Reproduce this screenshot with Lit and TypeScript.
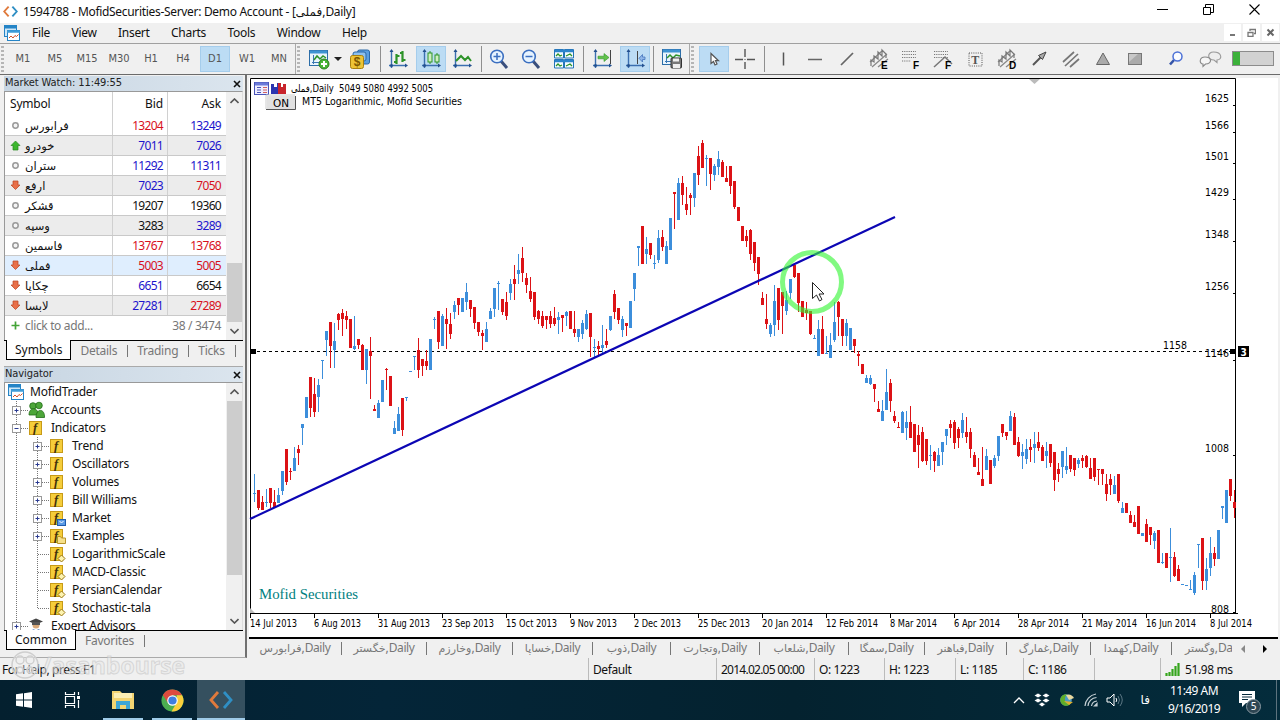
import { LitElement, html, svg, css, nothing } from 'lit';
import { customElement, property } from 'lit/decorators.js';
import { classMap } from 'lit/directives/class-map.js';

const BLUE = '#3c8edb';
const RED = '#dc1216';

// one entry per bar: colour, high, body top, body bottom, low
const CANDLES = `
b474,493,494,502 r490,490,508,510 r496,502,510,510 b489,502,503,507 r488,488,503,508 r490,502,508,508
b488,495,503,503 b471,471,491,495 r449,449,482,485 r468,471,472,480 b447,458,471,471 r445,449,453,465
b424,424,428,445 b397,397,418,418 r377,377,408,417 r378,394,412,417 b379,385,397,412 b360,360,361,379
b331,331,340,356 r322,322,346,368 b323,341,350,368 r313,314,320,330 r309,313,319,336 r311,316,320,329
r319,319,348,348 b316,346,349,350 r339,339,345,349 r344,345,370,370 b349,349,370,384 r337,351,356,399
r405,409,411,411 b400,403,418,418 b380,380,402,402 r368,369,370,390 r376,376,406,406 b421,428,434,434
b407,414,431,431 r398,398,430,436 b397,397,398,401 b371,371,372,372 b356,356,357,370 r338,350,370,378
r359,359,366,376 r350,361,366,370 b339,339,370,370 b317,319,320,329 r311,311,342,349 b314,316,346,346
r308,319,324,349 r313,324,334,339 b301,305,312,319 r298,298,305,315 b298,298,312,312 b283,292,302,310
r300,300,309,317 r307,307,323,329 r322,322,332,336 r330,333,336,350 b322,329,342,342 b308,311,319,319
b288,288,309,317 b281,283,284,310 r299,299,312,315 r292,302,316,320 b279,284,293,300 r265,279,284,300
b254,270,274,284 r247,258,273,282 r273,278,285,293 r277,291,299,302 r292,292,317,320 r310,311,319,324
r311,316,326,328 r316,316,320,329 r311,316,324,328 r307,318,324,326 b312,317,320,334 r315,315,318,332
b311,312,316,326 r311,311,329,329 r311,329,333,337 b329,329,337,342 b320,323,334,339 b310,314,329,330
r313,313,337,357 b339,347,348,357 r341,346,349,355 b325,345,348,354 r329,341,345,348 b316,316,330,331
r290,294,312,319 r308,308,320,324 b316,319,330,337 r323,323,326,336 b301,301,328,328 b273,273,289,301
b246,246,248,266 r226,226,264,264 b237,249,254,264 r243,243,255,259 b255,263,264,269 b230,238,260,263
r230,237,247,251 b241,246,264,264 b218,218,250,250 r192,192,194,229 b178,183,220,220 r176,183,195,205
r187,204,210,215 r193,195,198,215 b173,173,198,207 r146,156,175,185 r140,143,168,168 b155,158,159,186
r158,158,174,190 b164,166,175,181 b151,159,167,175 r160,162,177,177 r166,178,182,182 r166,166,186,194
r181,181,207,209 r207,207,221,221 r226,226,241,241 r230,236,241,247 r229,230,254,260 r242,242,263,271
r257,257,274,285 r292,298,305,305 r294,319,324,329 b323,325,334,337 b285,301,325,336 r288,288,320,330
r292,292,306,334 b291,300,311,315 b279,279,293,299 r265,265,277,278 r273,273,303,312 r301,301,317,317
r302,310,313,320 r311,311,334,335 b335,338,339,339 b320,329,356,356 r316,329,354,354 b336,353,354,354
b333,345,358,358 b302,322,340,342 r301,302,317,336 r319,319,336,346 b319,323,336,346 b328,328,350,350
r339,339,346,353 r351,354,356,366 r364,364,374,374 b375,378,383,383 b375,378,384,385 r384,384,389,402
r401,409,412,412 b400,411,421,421 b369,392,410,410 r379,383,401,412 r411,416,421,423 r422,427,428,428
b411,412,433,433 b411,422,428,440 r406,422,438,438 r424,424,452,452 r425,435,445,468 r427,432,461,462
r439,439,461,465 b445,455,456,470 r451,452,461,472 b448,455,466,466 b442,442,452,465 b429,429,436,445
r420,424,428,438 r420,422,443,449 r427,429,438,448 b413,420,433,438 r417,432,437,443 r428,432,449,458
r452,455,467,467 r458,472,475,475 r447,479,486,486 b449,456,470,470 r460,460,484,484 b455,458,466,468
b436,436,456,461 r424,424,433,437 r432,432,436,440 b411,416,431,431 r413,417,445,445 r437,442,456,457
b444,452,456,469 b439,449,459,464 r439,447,450,462 b432,444,448,463 r432,442,448,451 r445,447,461,461
b442,451,456,468 r444,444,463,467 r452,452,480,491 r463,469,474,482 b451,451,467,478 b447,466,470,474
r455,455,469,472 r458,458,470,476 b458,460,464,468 r455,458,461,468 r455,456,467,468 r458,468,479,479
r458,458,477,481 r469,469,470,485 r469,469,474,485 r474,484,494,501 r474,479,485,495 b476,485,494,494
r474,474,501,503 b502,508,513,513 r503,503,513,513 r511,515,523,523 r515,522,527,527 r506,506,534,534
b533,533,536,536 r519,524,542,542 r527,527,535,545 b531,533,541,549 r530,530,563,563 b553,562,563,564
r553,553,568,568 b528,557,558,582 r552,557,576,577 r565,569,581,581 b584,584,585,585 b585,585,586,586
b580,589,590,590 b572,575,593,595 b544,544,545,568 r538,538,581,590 b558,569,581,590 b537,553,568,576
r547,553,559,566 b530,530,559,559 b506,506,508,519 b490,490,523,523 r479,479,496,501 r490,502,508,518
`.trim().split(/\s+/).map((entry) => ({
  color: entry[0] === 'b' ? BLUE : RED,
  values: entry.slice(1).split(',').map(Number),
}));

const PRICES: [string, number][] = [
  ['1625', 98], ['1566', 125], ['1501', 156], ['1429', 192], ['1348', 234],
  ['1256', 286], ['1146', 353], ['1008', 448], ['808', 609],
];

const DATES: [string, number][] = [
  ['14 Jul 2013', 47], ['6 Aug 2013', 47], ['31 Aug 2013', 52], ['23 Sep 2013', 52],
  ['15 Oct 2013', 51], ['9 Nov 2013', 47], ['2 Dec 2013', 47], ['25 Dec 2013', 52],
  ['20 Jan 2014', 51], ['12 Feb 2014', 52], ['8 Mar 2014', 47], ['6 Apr 2014', 46],
  ['28 Apr 2014', 51], ['21 May 2014', 55], ['16 Jun 2014', 50], ['8 Jul 2014', 42],
];

const QUOTES = [
  { name: 'فرابورس', bid: '13204', ask: '13249', dir: 'flat', b: 'red', a: 'blue' },
  { name: 'خودرو', bid: '7011', ask: '7026', dir: 'up', b: 'blue', a: 'blue' },
  { name: 'ستران', bid: '11292', ask: '11311', dir: 'flat', b: 'blue', a: 'blue' },
  { name: 'ارفع', bid: '7023', ask: '7050', dir: 'down', b: 'blue', a: 'red' },
  { name: 'قشکر', bid: '19207', ask: '19360', dir: 'flat', b: 'black', a: 'black' },
  { name: 'وسپه', bid: '3283', ask: '3289', dir: 'flat', b: 'black', a: 'blue' },
  { name: 'فاسمین', bid: '13767', ask: '13768', dir: 'flat', b: 'red', a: 'red' },
  { name: 'فملی', bid: '5003', ask: '5005', dir: 'down', b: 'red', a: 'red', selected: true },
  { name: 'چکاپا', bid: '6651', ask: '6654', dir: 'down', b: 'blue', a: 'black' },
  { name: 'لابسا', bid: '27281', ask: '27289', dir: 'down', b: 'blue', a: 'red' },
];

const TREE = [
  { label: 'MofidTrader', level: 0, icon: 'app' },
  { label: 'Accounts', level: 1, icon: 'people', box: '+' },
  { label: 'Indicators', level: 1, icon: 'f', box: '-' },
  { label: 'Trend', level: 2, icon: 'f', box: '+' },
  { label: 'Oscillators', level: 2, icon: 'f', box: '+' },
  { label: 'Volumes', level: 2, icon: 'f', box: '+' },
  { label: 'Bill Williams', level: 2, icon: 'f', box: '+' },
  { label: 'Market', level: 2, icon: 'f-market', box: '+' },
  { label: 'Examples', level: 2, icon: 'f-folder', box: '+' },
  { label: 'LogarithmicScale', level: 2, icon: 'f-dot' },
  { label: 'MACD-Classic', level: 2, icon: 'f-dot' },
  { label: 'PersianCalendar', level: 2, icon: 'f-dot' },
  { label: 'Stochastic-tala', level: 2, icon: 'f-dot', last: true },
  { label: 'Expert Advisors', level: 1, icon: 'expert', box: '+' },
];

const CHART_TABS: [string, number][] = [
  ['فرابورس', 93], ['خگستر', 85], ['وخارزم', 86], ['خساپا', 80], ['ذوب', 78], ['وتجارت', 89],
  ['شلعاب', 89], ['سمگا', 76], ['فباهنر', 82], ['غمارگ', 84], ['کهمدا', 81],
];

// icon name, gap before it; 'sep', 'edge' and 'caret' are narrower than the 30px buttons
const TOOLS: [string, number, boolean?][] = [
  ['new', 4], ['caret', 0], ['money', 3], ['sep', 5],
  ['bars', 2], ['candles', 3, true], ['line', 1], ['sep', 4],
  ['zoomin', 2], ['zoomout', 2], ['tile', 3], ['sep', 4],
  ['scroll', 3], ['shift', 3, true], ['sep', 3], ['template', 3], ['edge', 2],
  ['cursor', 5, true], ['cross', 1], ['sep', 4],
  ['vline', 3], ['hline', 2], ['trend', 2], ['channel-e', 2], ['fibo', 2], ['fibofan', 2],
  ['text', 2], ['channel-d', 2], ['arrow', 2], ['pitch', 2], ['triangle', 2], ['rect', 2],
  ['search', 11], ['chat', 4],
];

const axes = svg`<path d="M3.500 1v18M1 16.500h17" stroke="#3b6fb0" stroke-width="1.400" fill="none"/>
  <path d="M3.500 0l-2 3h4zM20 16.500l-3-2v4z" fill="#24518f"/><circle cx="3.500" cy="16.500" r="1.500" fill="#24518f"/>`;

const channel = svg`<path d="M1 13L13 2M3 18L18 5M9 18L19 10" stroke="#888" stroke-width="1.300"/>
  <path d="M2 17v-6l3 2V7l4 3V3l4 4V1l4 4v4" stroke="#777" stroke-width="1.200" fill="none"/>`;

const letter = (char: string) => svg`<text x="12" y="20" font-family="Liberation Sans" font-weight="bold" font-size="10" fill="#000">${char}</text>`;

const fiboDots = svg`<path d="M1 2.500h14M1 5.500h14M1 8.500h14" stroke="#777" stroke-width="1.200" stroke-dasharray="1.200 1"/>`;

const TOOL_ICONS: Record<string, unknown> = {
  new: svg`<rect x=".5" y="1.500" width="18" height="15" fill="#e9f4fc" stroke="#2c6da8"/><path d="M1 3h17" stroke="#3d93d2" stroke-width="3"/>
    <path d="M4.500 6v9M3 13.500h13" stroke="#3b78b5"/><path d="M5 11l3-4 3 3 3-3 3 2" stroke="#2d9329" stroke-width="1.500" fill="none"/>
    <circle cx="15" cy="15" r="5" fill="#48b437" stroke="#27801c"/><path d="M12 15h6M15 12v6" stroke="#fff" stroke-width="2"/>`,
  money: svg`<rect x="7.500" y="1" width="12" height="14" rx="2" fill="#5a9ee0" stroke="#2b68a7"/><rect x="3" y="3" width="13" height="9" rx="2" fill="#8dc0ee" stroke="#2b68a7"/>
    <rect x=".5" y="6.500" width="13" height="13" rx="2" fill="#edc436" stroke="#a8800f"/><text x="3.800" y="17" font-family="Liberation Sans" font-weight="bold" font-size="12" fill="#7d5800">$</text>`,
  bars: svg`${axes}<path d="M8.500 5v10M6 13h2.500M8.500 7h3M14.500 2v11M12 4h2.500M14.500 11h3" stroke="#2d9329" stroke-width="2.200" fill="none"/>`,
  candles: svg`${axes}<path d="M9 2v13M16 4v11" stroke="#2d9329"/><rect x="7" y="4" width="4" height="9" fill="#cfeec0" stroke="#2d9329"/><rect x="14" y="6" width="4" height="7" fill="#cfeec0" stroke="#2d9329"/>`,
  line: svg`${axes}<path d="M4 12l5-5 4 4 3-3 3 4" stroke="#2d9329" stroke-width="2" fill="none"/>`,
  zoomin: svg`<path d="M12 12l6 7" stroke="#3a4f7c" stroke-width="3"/><circle cx="8" cy="7.500" r="6.300" fill="#e6f3ff" stroke="#3b6fc0" stroke-width="1.600"/><path d="M4.500 7.500h7M8 4v7" stroke="#3b6fc0" stroke-width="1.500"/>`,
  zoomout: svg`<path d="M12 12l6 7" stroke="#3a4f7c" stroke-width="3"/><circle cx="8" cy="7.500" r="6.300" fill="#e6f3ff" stroke="#3b6fc0" stroke-width="1.600"/><path d="M4.500 7.500h7" stroke="#3b6fc0" stroke-width="1.500"/>`,
  tile: svg`<path d="M.5 .5h9v8.500h-9zM10.500 .5h9v8.500h-9zM.5 10.500h9v8.500h-9zM10.500 10.500h9v8.500h-9z" fill="#f4fbff" stroke="#2474b8"/>
    <path d="M1 2h18M1 12h18" stroke="#2c84cc" stroke-width="2.500"/><path d="M2 7l2-2 2 2 2-1M12 7l2-1 2-1 2 2M2 17l2-2 2 2 2-1M12 17l2-1 2-1 2 2" stroke="#2d9329" stroke-width="1.300" fill="none"/>`,
  scroll: svg`${axes}<path d="M18.500 1v14" stroke="#444"/><path d="M6 7.200h6V4.500l5 4-5 4V9.800H6z" fill="#62c24b" stroke="#2d9329" stroke-width=".6"/>`,
  shift: svg`${axes}<path d="M12.500 2v13" stroke="#444"/><path d="M20 8h-2.500V5.500L14 9.300l3.500 3.700v-2.500H20z" fill="#8fb6e8" stroke="#4474bb" stroke-width=".8"/>`,
  template: svg`<rect x=".5" y=".5" width="18" height="15" fill="#e9f4fc" stroke="#2c6da8"/><path d="M1 2h17" stroke="#3d93d2" stroke-width="3"/><path d="M4.500 5v9M3 12.500h6" stroke="#3b78b5"/>
    <path d="M5 9l3-3 3 3 3-3 4 1" stroke="#2d9329" stroke-width="1.500" fill="none"/><rect x="9" y="9" width="10.500" height="10" rx="1" fill="#777" stroke="#333"/><path d="M11 9.500h6v3h-6zM11 15h7v4h-7z" fill="#eee"/>`,
  cursor: svg`<path d="M7 4.500v10l2.500-2 1.500 3.500 2-1-1.500-3.300h3z" fill="#fff" stroke="#555" stroke-width="1.200"/>`,
  cross: svg`<path d="M0 10.500h8M12 10.500h8M10 0v8M10 13v7" stroke="#555" stroke-width="1.400"/><path d="M9.500 10.500h1" stroke="#555"/>`,
  vline: svg`<path d="M10.500 3.500v13" stroke="#555" stroke-width="1.500"/>`,
  hline: svg`<path d="M3 10.500h14" stroke="#666" stroke-width="1.500"/>`,
  trend: svg`<path d="M4 16L16 4" stroke="#666" stroke-width="1.700"/>`,
  'channel-e': svg`${channel}${letter('E')}`,
  'channel-d': svg`${channel}${letter('D')}`,
  fibo: svg`${fiboDots}<path d="M1 12h9" stroke="#777" stroke-dasharray="1.200 1"/>${letter('F')}`,
  fibofan: svg`${fiboDots}<path d="M1 18L12 8l7 7" stroke="#777" stroke-width="1.500" fill="none"/>${letter('F')}`,
  text: svg`<rect x="4" y="4" width="13" height="13" fill="none" stroke="#555" stroke-dasharray="1 1.200"/><text x="6.300" y="14.500" font-family="Liberation Serif" font-weight="bold" font-size="12" fill="#555">T</text>`,
  arrow: svg`<path d="M4 16L14 6" stroke="#555" stroke-width="2"/><path d="M17 3l-7.500 3.500 4 4z" fill="#aaa" stroke="#444"/>`,
  pitch: svg`<path d="M2 13L13 3M4 17L17 5M9 18l9-8" stroke="#777" stroke-width="1.700"/>`,
  triangle: svg`<path d="M10 4l6.500 11.500h-13z" fill="#aaa" stroke="#666"/>`,
  rect: svg`<rect x="3.500" y="4.500" width="13" height="11" fill="#aaa" stroke="#777"/><path d="M4 13L13 5H4z" fill="#c8c8c8"/>`,
  search: svg`<path d="M8 11l-4 4.500" stroke="#3454a8" stroke-width="2.600"/><circle cx="11.500" cy="7.500" r="4.500" fill="#fafcff" stroke="#4a6fd6" stroke-width="1.500"/>`,
  chat: svg`<path d="M13.500 3c9 0 9 8 3.500 8v2.500L14 11c-7 0-7-8-.5-8z" fill="#eee" stroke="#999" stroke-width="1.100"/><path d="M5 8c-6 0-6 7-2 7v2.500L5.500 15c7 0 6.500-7-.5-7z" fill="#f6f6f6" stroke="#888" stroke-width="1.100"/>`,
};

const appIcon = html`<svg width="16" height="16" viewBox="0 0 16 16">
  <rect x=".5" y=".5" width="12" height="11" fill="#cfe8f8" stroke="#2584c6"/><path d="M0 2h13" stroke="#2584c6" stroke-width="3"/>
  <rect x="3.500" y="5.500" width="12" height="10" fill="#fff" stroke="#2584c6"/><path d="M3 6.500h13" stroke="#3f9cd8" stroke-width="2.500"/>
  <path d="M5 13l2-2 2 2 2-2.500 1.500 1 2-2" stroke="#d4502a" fill="none"/></svg>`;

@customElement('app-icon')
export class AppIcon extends LitElement {
  @property() name = '';

  static styles = css`
    :host { display: block; width: 20px; height: 20px; }
    svg { display: block; overflow: visible; }
  `;

  render() {
    return html`<svg width="20" height="20" viewBox="0 0 20 20">${TOOL_ICONS[this.name] ?? nothing}</svg>`;
  }
}

@customElement('price-chart')
export class PriceChart extends LitElement {
  static styles = css`
    :host { display: block; background: #fff; }
    svg { display: block; }
    text { font-family: "DejaVu Sans Condensed", "DejaVu Sans", sans-serif; font-size: 10px; fill: #000; }
    .brand { font-family: "Liberation Serif", serif; font-size: 15px; fill: #008080; }
    .price { font-size: 11px; }
    .wick, .body { shape-rendering: crispEdges; }
    .on { font-size: 11px; }
  `;

  candle(color: string, [high, top, bottom, low]: number[], i: number) {
    const x = 254 + i * 4;
    return svg`<rect class="wick" x=${x} y=${high} width="1" height=${low - high} fill=${color}/>
      <rect class="body" x=${x - 1} y=${top} width="3" height=${bottom - top} fill=${color}/>`;
  }

  render() {
    return html`<svg width="1028" height="558" viewBox="249 78 1028 558">
      <path d="M250.500 613.500V78.500H1235.500V613.500" fill="none" stroke="#000"/>
      <path d="M250 613.500H1238" stroke="#000"/>
      <path d="M1029 79h11l-5.500 5z" fill="#bbb"/>
      <path d="M250 613v-5l5 5z" fill="#bbb"/>
      <path d="M251 351.500H1235" stroke="#000" stroke-dasharray="3 3"/>
      ${CANDLES.map((c, i) => this.candle(c.color, c.values, i))}
      <path d="M250 519L895 217" stroke="#0c06b4" stroke-width="2.200"/>
      <rect x="250" y="349" width="6" height="5"/><rect x="1230" y="349" width="5" height="5"/>
      ${PRICES.map(([label, y]) => svg`
        <text class="price" x="1229" y=${y + 4} text-anchor="end" textLength=${label.length * 6} lengthAdjust="spacingAndGlyphs">${label}</text>
        <path d="M1233 ${Math.min(y + 7.5, 612.5)}h3" stroke="#000"/>`)}
      ${DATES.map(([label, width], i) => svg`
        <path d="M${250.5 + i * 64} 614v4" stroke="#000"/>
        <text x=${250 + i * 64} y="627" textLength=${width} lengthAdjust="spacingAndGlyphs">${label}</text>`)}
      <text class="price" x="1163" y="349" textLength="24" lengthAdjust="spacingAndGlyphs">1158</text>
      <rect x="1238" y="346" width="11" height="11"/>
      <text x="1240.500" y="355.500" font-weight="bold" style="fill:#fff">3</text>

      <g transform="translate(254 82)">
        <rect x=".5" y=".5" width="14" height="12" fill="#eef" stroke="#4a55b8"/><path d="M1 2h13" stroke="#6a7ad8" stroke-width="3"/>
        <path d="M3 5.500h4M3 8h4M3 10.500h4" stroke="#4a55b8"/><path d="M9 5.500h4M9 8h4M9 10.500h4" stroke="#d36060"/>
        <path d="M17 2h3v3h3V1h3v11h-9z" fill="#2b35b0"/><path d="M24 1h3v4h2V2h3v10h-8z" fill="#c8242c"/>
      </g>
      <text x="291" y="92" textLength="142" lengthAdjust="spacingAndGlyphs" xml:space="preserve">فملی,Daily  5049 5080 4992 5005</text>
      <path d="M266 109V95h29" fill="none" stroke="#ccc"/><rect x="267" y="96" width="28" height="13" fill="#e1e1e1"/><path d="M266 109.500h29.500V96" fill="none" stroke="#555"/>
      <text class="on" x="273" y="106.500" textLength="16" lengthAdjust="spacingAndGlyphs">ON</text>
      <text class="on" x="302" y="105" textLength="160" lengthAdjust="spacingAndGlyphs">MT5 Logarithmic, Mofid Securities</text>
      <text class="brand" x="259" y="599" textLength="99" lengthAdjust="spacingAndGlyphs">Mofid Securities</text>

      <circle cx="812" cy="282" r="29.500" fill="none" stroke="#33f533" stroke-opacity=".62" stroke-width="5"/>
      <path d="M812.500 282.500v16l4-3.500 3 6 2.500-1.500-3-5.500h5z" fill="#fff" stroke="#222"/>
    </svg>`;
  }
}

@customElement('market-watch')
export class MarketWatch extends LitElement {
  static styles = css`
    :host { display: block; flex: 1; background: #fff; font: 12px "Noto Sans", sans-serif; color: #111; }
    .row { display: grid; grid-template-columns: 20px 88px 55px 57px; height: 20px; line-height: 20px; box-sizing: border-box; border-bottom: 1px solid #c9c9c9; }
    .row > * { height: 19px; }
    .header { height: 24px; border-bottom: none; line-height: 24px; grid-template-columns: 108px 55px 57px; }
    .header > * { height: 24px; }
    .header .name { padding-left: 5px; letter-spacing: -0.2px; }
    .alt { background: #ececec; }
    .selected { background: #dfeefe; }
    .name { font-family: "Noto Sans", "DejaVu Sans", sans-serif; border-right: 1px solid #d0d0d0; }
    .fa { font-family: "DejaVu Sans", sans-serif; font-size: 11.5px; }
    .num { text-align: right; padding-right: 4px; border-right: 1px solid #d0d0d0; letter-spacing: -0.7px; }
    .num.end { border-right: none; }
    .num.word { letter-spacing: -0.1px; }
    .red { color: #d8101c; }
    .blue { color: #1c14cc; }
    .black { color: #111; }
    .mark { display: flex; align-items: center; justify-content: center; }
    .add { border: none; color: #777; grid-template-columns: 20px 120px 80px; }
    .add .num, .add .name { border: none; letter-spacing: -0.35px; }
  `;

  mark(dir: string) {
    if (dir === 'flat') {
      return svg`<circle cx="5.500" cy="5.500" r="2.700" fill="#f4f4f4" stroke="#999" stroke-width="1.500"/>`;
    }
    return dir === 'up'
      ? svg`<path d="M5.500 1l4.500 4.500H8V10H3V5.500H1z" fill="#3cb62e" stroke="#278a1e" stroke-width=".7"/>`
      : svg`<path d="M5.500 9.500L10 5H8V1H3v4H1z" fill="#e8704a" stroke="#b94420" stroke-width=".7"/>`;
  }

  render() {
    return html`
      <div class="row header"><span class="name">Symbol</span><span class="num word">Bid</span><span class="num end word">Ask</span></div>
      ${QUOTES.map((q, i) => html`
        <div class=${classMap({ row: true, alt: i % 2 === 1, selected: !!q.selected })}>
          <span class="mark"><svg width="11" height="11">${this.mark(q.dir)}</svg></span>
          <span class="name fa">${q.name}</span>
          <span class="num ${q.b}">${q.bid}</span>
          <span class="num end ${q.a}">${q.ask}</span>
        </div>`)}
      <div class="row add">
        <span class="mark"><svg width="11" height="11"><path d="M1.500 5.500h8M5.500 1.500v8" stroke="#43a336" stroke-width="1.700"/></svg></span>
        <span class="name">click to add...</span>
        <span class="num end">38 / 3474</span>
      </div>
    `;
  }
}

@customElement('nav-tree')
export class NavTree extends LitElement {
  static styles = css`
    :host { display: block; flex: 1; overflow: hidden; background: #fff; font: 12px "Noto Sans", sans-serif; color: #111; letter-spacing: -0.2px; }
    .row { display: flex; align-items: center; height: 18px; line-height: 18px; white-space: pre; }
    .icon { width: 23px; height: 18px; overflow: visible; }
    .root { padding-left: 3px; gap: 6px; }
  `;

  guides(item: (typeof TREE)[number]) {
    const cx = item.level === 1 ? 11.5 : 32.5;
    const width = item.level === 1 ? 23 : 44;
    const branch = item.level === 1 ? '' : `M${cx} 0v${item.last ? 9 : 18}`;
    return html`<svg width=${width} height="18">
      <path d="M11.500 0v18${branch}M${cx} 9.500h${width - cx}" stroke="#777" stroke-dasharray="1 1" fill="none" shape-rendering="crispEdges"/>
      ${item.box ? svg`<rect x=${cx - 4} y="5.500" width="8" height="8" fill="#fff" stroke="#999"/><path d="M${cx - 2} 9.500h4" stroke="#2a3a90"/>` : nothing}
      ${item.box === '+' ? svg`<path d="M${cx} 7.500v4" stroke="#2a3a90"/>` : nothing}
    </svg>`;
  }

  icon(name: string) {
    if (name === 'people') {
      return svg`<g fill="#4da63a" stroke="#226c18" stroke-width=".8"><circle cx="5" cy="5" r="3.300"/><circle cx="11" cy="4.500" r="3.300"/><path d="M1 14c0-8 8-8 9-2v2z"/><path d="M8 16.500c0-9.500 9-9.500 8.500 0z"/></g>`;
    }
    if (name === 'expert') {
      return svg`<circle cx="8" cy="8" r="3.500" fill="#d9a878"/><path d="M1 4.500L8 1.500l7 3-7 3z" fill="#444"/><path d="M4 5v3h8V5" fill="#555"/><path d="M1 18c0-8 14-8 15 0z" fill="#3f6eb0"/><path d="M6 12l2 3 2-3" fill="#fff"/>`;
    }
    return svg`<rect x="1.500" y="2.500" width="12" height="13" fill="#f5cd3a" stroke="#c79a17"/>
      <text x="5" y="12.800" font-family="Liberation Serif" font-style="italic" font-weight="bold" font-size="12.500" fill="#40300a">f</text>
      ${name === 'f-market' ? svg`<rect x="8.500" y="10.500" width="8" height="6" fill="#5b9be6" stroke="#1f5cae"/><path d="M10.500 12l2 2 2-2" stroke="#fff" fill="none"/>` : nothing}
      ${name === 'f-folder' ? svg`<path d="M8.500 16.500v-7h3l1 1.500h4v5.500z" fill="#f6e08a" stroke="#b8942a"/>` : nothing}
      ${name === 'f-dot' ? svg`<path d="M12.500 10l3.500 3.500-3.500 3.500L9 13.500z" fill="#fdf3b0" stroke="#9a7710"/>` : nothing}`;
  }

  render() {
    return TREE.map((item) => item.level === 0
      ? html`<div class="row root">${appIcon}<span>${item.label}</span></div>`
      : html`<div class="row">${this.guides(item)}<svg class="icon">${this.icon(item.icon)}</svg><span>${item.label}</span></div>`);
  }
}

@customElement('app-root')
export class AppRoot extends LitElement {
  static styles = css`
    :host { display: flex; flex-direction: column; width: 1280px; height: 720px; overflow: hidden; background: #f0f0f0; font: 12px "Noto Sans", "DejaVu Sans", sans-serif; color: #111; white-space: nowrap; }
    svg { display: block; flex: none; }
    .fa { font-family: "DejaVu Sans", sans-serif; letter-spacing: 0; }

    .title { display: flex; align-items: center; height: 23px; background: #fff; padding-left: 3px; gap: 5px; }
    .title-text { flex: 1; letter-spacing: -0.32px; }
    .caption-buttons { display: flex; align-items: center; gap: 35px; padding-right: 20px; margin-top: -3px; }

    .menu { display: flex; align-items: center; height: 20px; padding-left: 4px; border-bottom: 1px solid #a0a0a0; }
    .menu-item { letter-spacing: -0.3px; }
    .menu-items { display: flex; flex: 1; gap: 21.5px; padding-left: 12px; }
    .mdi { display: flex; gap: 2px; padding-right: 1px; }
    .mdi-button { width: 17px; height: 17px; background: #fff; display: flex; align-items: center; justify-content: center; }

    .toolbar { display: flex; align-items: center; height: 31px; border-bottom: 1px solid #6b6b6b; font: 11px "DejaVu Sans Condensed", "DejaVu Sans", sans-serif; color: #555; }
    .grip { width: 3px; height: 26px; background: repeating-linear-gradient(#b5b5b5 0 2px, transparent 2px 4px); flex: none; }
    .frames { display: flex; gap: 2px; padding: 0 1px 0 4px; }
    .button { width: 30px; height: 26px; display: flex; align-items: center; justify-content: center; flex: none; }
    .on { background: #bcdcf4; box-shadow: inset 0 0 0 1px #a5cdec; }
    .sep { width: 1px; height: 26px; background: #8f8f8f; flex: none; }
    .edge { border-right: 1px solid #aaa; height: 30px; width: 0; margin-right: 1px; flex: none; }
    .caret { width: 8px; border: 4px solid transparent; border-top-color: #222; box-sizing: border-box; height: 4px; border-bottom: none; flex: none; }
    .meter { width: 40px; height: 13px; margin-left: 7px; background: #d2d2d2; border: 1px solid #8c8c8c; }
    .meter-fill { width: 7px; height: 100%; background: #3cb13a; }

    .main { display: flex; height: 583px; }
    .side { width: 247px; display: flex; flex-direction: column; border-right: 2px solid #707070; box-sizing: border-box; padding: 1px 2px 0 4px; border-bottom: 1px solid #aaa; }
    .panel-title { display: flex; align-items: center; justify-content: space-between; height: 15px; line-height: 13px; background: linear-gradient(90deg, #c7d5e2, #dbe5ee); padding: 0 2px 0 1px; font: 11px/13px "DejaVu Sans Condensed", "DejaVu Sans", sans-serif; letter-spacing: -0.08px; color: #222; }
    .panel-title span { margin-top: -2px; }
    .panel { display: flex; border: 1px solid #999; border-right-color: #ddd; border-bottom: none; background: #fff; box-sizing: border-box; }
    .watch { height: 249px; }
    .nav { height: 248px; }
    .nav-title { margin-top: 6px; border-top: 1px solid #aaa; }
    .scroll { width: 16px; display: flex; flex-direction: column; align-items: center; background: #f0f0f0; flex: none; }
    .scroll svg { margin: 6px 0; }
    .thumb { width: 15px; background: #cdcdcd; }
    .tabs { display: flex; height: 20px; line-height: 19px; border-top: 1px solid #000; color: #777; box-sizing: border-box; letter-spacing: -0.25px; }
    .tab { padding: 0 10px 0 9px; flex: none; }
    .active { margin: -1px 0 0 2px; background: #fff; color: #111; border: solid #000; border-width: 0 1.5px 1.5px; padding: 0 8px; height: 19px; letter-spacing: 0; }
    .bar { width: 1px; height: 12px; background: #777; margin-top: 4px; flex: none; }

    .chart-area { display: flex; flex-direction: column; flex: 1; padding: 2px 2px 0 2px; }
    price-chart { border-bottom: 2px solid #000; height: 559px; margin-top: 1px; }
    .chart-tabs { display: flex; align-items: center; height: 19px; color: #777; }
    .chart-tab { box-sizing: border-box; text-align: center; border-right: 1px solid #777; height: 13px; line-height: 12px; flex: none; letter-spacing: -0.4px; }
    .chart-tab .fa { font-size: 11px; }
    .chart-tab.cut { border: none; width: 60px; padding-left: 13px; text-align: left; overflow: hidden; height: 19px; line-height: 17px; }
    .arrows { display: flex; gap: 18px; padding-left: 9px; }

    .status { position: relative; display: flex; height: 22px; line-height: 21px; letter-spacing: -0.4px; }
    .cell { border-left: 1px solid #bbb; padding-left: 4px; box-sizing: border-box; display: flex; align-items: center; gap: 5px; }
    .cell.first { border: none; width: 588px; padding-left: 2px; }
    .cell.stamp { width: 98px; letter-spacing: -0.75px; }
    .watermark { position: absolute; left: 10px; top: -10px; display: flex; align-items: center; gap: 0; font: bold 23px/34px "Open Sans", sans-serif; letter-spacing: 0; color: rgba(232, 232, 232, .5); -webkit-text-stroke: 1px rgba(190, 190, 190, .5); }

    .taskbar { display: flex; height: 40px; background: linear-gradient(90deg, #04202f, #042538 30%, #04222f 62%, #042c3c); color: #fff; }
    .task { height: 40px; width: 48px; display: flex; align-items: center; justify-content: center; box-sizing: border-box; }
    .task.run { width: 40px; margin: 0 5px 0 4px; border-bottom: 2px solid #9fcbe8; padding-top: 2px; }
    .task.current { width: 48px; margin: 0; background: #35505f; border-bottom: 2px solid #9fcbe8; padding-top: 2px; }
    .tray { display: flex; align-items: center; gap: 9px; margin-left: auto; }
    .speaker { margin-left: -2px; }
    .lang { margin: 0 2px 0 9px; }
    .clock { text-align: center; line-height: 18px; width: 66px; letter-spacing: -0.55px; }
    .notice { position: relative; width: 20px; height: 20px; margin: 0 9px 0 2px; }
    .badge { position: absolute; left: 8px; top: 9px; width: 15px; height: 15px; border-radius: 50%; background: #2e4653; border: 1px solid #8a9aa3; box-sizing: border-box; font-size: 10px; line-height: 13px; text-align: center; }
    .edge-line { width: 3px; height: 40px; border-left: 1px solid #5d737e; }
  `;

  closeGlyph = html`<svg width="8" height="8"><path d="M1 1l6 6M7 1L1 7" stroke="#111" stroke-width="1.600"/></svg>`;

  brandMark(width: number, height: number, stroke: number) {
    return html`<svg width=${width} height=${height} viewBox="0 0 24 18" preserveAspectRatio="none">
      <path d="M9 1L2 9l7 8" fill="none" stroke="#e07a3c" stroke-width=${stroke}/>
      <path d="M15 1l7 8-7 8" fill="none" stroke="#2f8fc4" stroke-width=${stroke}/>
    </svg>`;
  }

  scrollbar(before: number, thumb: number) {
    const chevron = (d: string) => html`<svg width="9" height="6"><path d=${d} fill="none" stroke="#555" stroke-width="1.600"/></svg>`;
    return html`<div class="scroll">
      ${chevron('M.5 5L4.500 1l4 4')}
      <div style="height:${before}px"></div>
      <div class="thumb" style="height:${thumb}px"></div>
      <div style="flex:1"></div>
      ${chevron('M.5 1l4 4 4-4')}
    </div>`;
  }

  tabs(active: string, rest: string[]) {
    return html`<div class="tabs"><div class="tab active">${active}</div>
      ${rest.map((t) => html`<div class="tab">${t}</div><div class="bar"></div>`)}</div>`;
  }

  tool([name, gap, on]: [string, number, boolean?]) {
    const margin = `margin-left:${gap}px`;
    if (name === 'sep' || name === 'caret') return html`<div class=${name} style=${margin}></div>`;
    if (name === 'edge') return html`<div class="edge" style=${margin}></div><div class="grip"></div>`;
    return html`<div class=${classMap({ button: true, on: !!on })} style=${margin}><app-icon name=${name}></app-icon></div>`;
  }

  tray() {
    return html`<div class="tray">
      <svg width="12" height="8"><path d="M1 7l5-5 5 5" fill="none" stroke="#fff" stroke-width="1.300"/></svg>
      <svg width="16" height="16" viewBox="0 0 16 16"><path d="M4 1l4 2.500L4 6 0 3.500zM12 1l4 2.500L12 6 8 3.500zM4 6l4 2.500L4 11 0 8.500zM12 6l4 2.500-4 2.500-4-2.500zM8 10l3.500 2.300L8 15l-3.500-2.700z" fill="#fff" stroke="#04283a" stroke-width=".8"/></svg>
      <svg width="16" height="16"><circle cx="7" cy="8" r="5.800" fill="#4c9cc8"/><path d="M7 2.200a5.800 5.800 0 1 0 4.500 9.600C6 13 4 7 8 2.300z" fill="#5fae2a"/><path d="M7 3q5-2 8 3l-5 2z" fill="#e9d9a0"/><path d="M5 9l9 1-4 3z" fill="#e0b02b"/></svg>
      <svg width="15" height="16"><path d="M1 14A13 13 0 0 1 12 2M4 14a9 9 0 0 1 8.500-8.500M7.500 14A6 6 0 0 1 13 9M10.500 14l2.500-2.500V14z" fill="none" stroke="#c6d0d5" stroke-width="1.200"/></svg>
      <svg class="speaker" width="17" height="16"><path d="M1 6h3l4-4v12l-4-4H1z" fill="none" stroke="#fff"/><path d="M10 6q1.500 2 0 4" fill="none" stroke="#fff"/><path d="M12 4q3 4 0 8M14 2q4.500 6 0 12" fill="none" stroke="#5d7885"/></svg>
      <span class="fa lang">فا</span>
      <div class="clock">11:49 AM<br>9/16/2019</div>
      <div class="notice">
        <svg width="18" height="18"><path d="M1 1h16v12H8l-4 4v-4H1z" fill="#fff"/><path d="M4 4.500h10M4 7h10M4 9.500h6" stroke="#04283a"/></svg>
        <div class="badge">5</div>
      </div>
      <div class="edge-line"></div>
    </div>`;
  }

  render() {
    return html`
      <div class="title">
        ${this.brandMark(15, 11, 3)}
        <span class="title-text">1594788 - MofidSecurities-Server: Demo Account - [<bdi class="fa">فملی</bdi>,Daily]</span>
        <div class="caption-buttons">
          <svg width="11" height="11"><path d="M0 5.500h11" stroke="#000"/></svg>
          <svg width="11" height="11"><path d="M.5 3.500h7v7h-7zM2.500 3V.5h8v8H8" fill="none" stroke="#000"/></svg>
          <svg width="11" height="11"><path d="M.5 .5l10 10M10.500 .5l-10 10" stroke="#000" stroke-width="1.100"/></svg>
        </div>
      </div>
      <div class="menu">
        ${appIcon}
        <div class="menu-items">
          ${['File', 'View', 'Insert', 'Charts', 'Tools', 'Window', 'Help'].map((m) => html`<span class="menu-item">${m}</span>`)}
        </div>
        <div class="mdi">
          <div class="mdi-button"><svg width="9" height="9"><path d="M2 7h5" stroke="#777" stroke-width="2"/></svg></div>
          <div class="mdi-button"><svg width="9" height="9"><path d="M1 4.500h5v4H1zM3 3V1.500h5.500v4H7" fill="none" stroke="#777" stroke-width="1.300"/></svg></div>
          <div class="mdi-button"><svg width="9" height="9"><path d="M1.500 1.500l6 6M7.500 1.500l-6 6" stroke="#666" stroke-width="2"/></svg></div>
        </div>
      </div>
      <div class="toolbar">
        <div class="grip" style="margin-left:1px"></div>
        <div class="frames">
          ${['M1', 'M5', 'M15', 'M30', 'H1', 'H4', 'D1', 'W1', 'MN'].map((f) => html`<div class=${classMap({ button: true, on: f === 'D1' })}>${f}</div>`)}
        </div>
        <div class="edge"></div><div class="grip"></div>
        ${TOOLS.map((t) => this.tool(t))}
        <div class="meter"><div class="meter-fill"></div></div>
      </div>

      <div class="main">
        <div class="side">
          <div class="panel-title"><span>Market Watch: 11:49:55</span>${this.closeGlyph}</div>
          <div class="panel watch"><market-watch></market-watch>${this.scrollbar(153, 59)}</div>
          ${this.tabs('Symbols', ['Details', 'Trading', 'Ticks'])}
          <div class="panel-title nav-title"><span>Navigator</span>${this.closeGlyph}</div>
          <div class="panel nav"><nav-tree></nav-tree>${this.scrollbar(0, 174)}</div>
          ${this.tabs('Common', ['Favorites'])}
        </div>
        <div class="chart-area">
          <price-chart></price-chart>
          <div class="chart-tabs">
            ${CHART_TABS.map(([name, width]) => html`<div class="chart-tab" style="width:${width}px"><bdi class="fa">${name}</bdi>,Daily</div>`)}
            <div class="chart-tab cut"><bdi class="fa">وگستر</bdi>,Daily</div>
            <div class="arrows">
              <svg width="4" height="8"><path d="M4 0v8L0 4z" fill="#888"/></svg>
              <svg width="4" height="8"><path d="M0 0v8l4-4z" fill="#000"/></svg>
            </div>
          </div>
        </div>
      </div>

      <div class="status">
        <div class="cell first">For Help, press F1</div>
        <div class="cell" style="width:128px">Default</div>
        <div class="cell stamp">2014.02.05 00:00</div>
        <div class="cell" style="width:70px">O: 1223</div>
        <div class="cell" style="width:71px">H: 1223</div>
        <div class="cell" style="width:68px">L: 1185</div>
        <div class="cell" style="width:71px">C: 1186</div>
        <div class="cell" style="width:66px"></div>
        <div class="cell"><svg width="15" height="13"><path d="M1.500 13v-3M4.500 13V9M7.500 13V6M10.500 13V3M13.500 13V0" stroke="#35a51c" stroke-width="2.200"/></svg>51.98 ms</div>
        <div class="watermark">
          <svg width="32" height="34" viewBox="0 0 32 34" fill="rgba(240,240,240,.4)" stroke="#cfcfcf" stroke-width="1.500"><circle cx="15" cy="17" r="13"/><circle cx="10" cy="12" r="4"/><circle cx="20" cy="12" r="4"/><circle cx="10" cy="22" r="3"/><circle cx="20" cy="22" r="3"/></svg>
          <span>/asanbourse</span>
        </div>
      </div>

      <div class="taskbar">
        <div class="task"><svg width="16" height="16"><path d="M0 2.300l7-1v6.200H0zM8 1.200L16 0v7.500H8zM0 8.500h7v6.200l-7-1zM8 8.500h8V16l-8-1.200z" fill="#fff"/></svg></div>
        <div class="task"><svg width="17" height="16"><path d="M1.500 4.500h9v7h-9zM1.500 0v2.500h9V0M1.500 16v-2.500h9V16M14.500 0v3M14.500 8v8" fill="none" stroke="#fff" stroke-width="1.200"/><path d="M13 4h3v3h-3z" fill="#fff"/></svg></div>
        <div style="width:3px"></div>
        <div class="task run"><svg width="22" height="22"><path d="M0 2h8l2 2h12v16H0z" fill="#f3d472"/><path d="M2 4h18v5H2z" fill="#fbeeb4"/><path d="M4 20V12h14v8h-4v-4H8v4z" fill="#3ea6d6"/></svg></div>
        <div class="task run"><svg width="23" height="23" viewBox="0 0 24 24"><circle cx="12" cy="12" r="11.500" fill="#4cae50"/><path d="M2 6.300A11.500 11.500 0 0 1 22 6.500H12L7 14z" fill="#dd4b3e"/><path d="M22 6.500A11.500 11.500 0 0 1 11 23.500l5.500-9.500V6.500z" fill="#fbcf3c"/><circle cx="12" cy="12" r="5.500" fill="#fff"/><circle cx="12" cy="12" r="4.300" fill="#3f7ee0"/></svg></div>
        <div class="task current">${this.brandMark(24, 18, 2.8)}</div>
        ${this.tray()}
      </div>
    `;
  }
}
